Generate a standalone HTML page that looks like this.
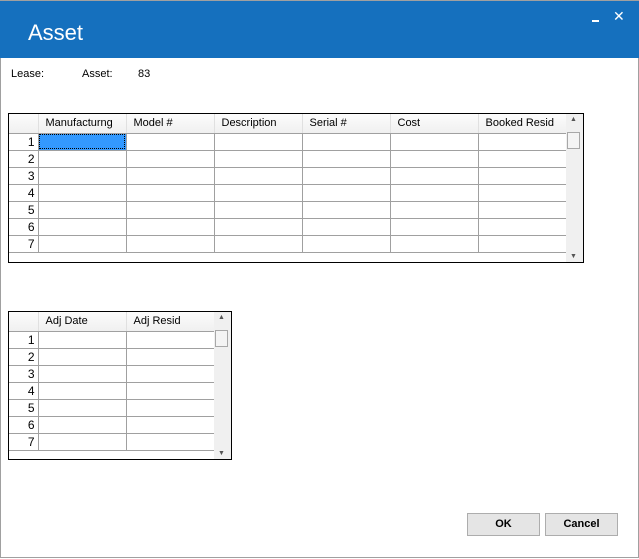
<!DOCTYPE html>
<html><head><style>
body{margin:0;width:639px;height:559px;position:relative;overflow:hidden;background:#fff;font-family:"Liberation Sans",sans-serif;font-size:11px;color:#000}
.win{position:absolute;left:0;top:0;width:637px;height:557px;border:1px solid #a0a0a0;border-top:none}
.title{position:absolute;left:0;top:0;width:639px;height:58px;background:#1570be;border-top:1px solid #a0a0a0;box-sizing:border-box}
.title span{position:absolute;left:28px;top:19px;color:#fff;font-size:22px}
.abs{position:absolute}
.grid{position:absolute;border:1px solid #000;background:#fff;overflow:hidden}
table{border-collapse:collapse;position:absolute;left:0;top:0}
td{border:1px solid #a0a0a0;height:17px;padding:0;box-sizing:border-box}
th{height:19px;background:linear-gradient(#fcfcfc,#f0f0f0);border-right:1px solid #e0e0e0;border-bottom:1px solid #a0a0a0;font-weight:normal;text-align:left;padding:0 0 0 7px;box-sizing:border-box}
td.rh{text-align:right;padding-right:3px;font-size:12px;border-left:none}
.sb{position:absolute;top:0;bottom:0;right:0;width:17px;background:#f0f0f0}
.thumb{position:absolute;left:1px;top:18px;width:13px;height:17px;border:1px solid #a8a8a8;background:#f4f4f4;box-sizing:border-box}
.btn{position:absolute;top:513px;width:73px;height:23px;background:#e5e5e5;border:1px solid #adadad;box-sizing:border-box;text-align:center;line-height:21px;font-weight:bold}
</style></head><body>
<div class="win"></div>
<div class="title"><span>Asset</span>
<div class="abs" style="left:592px;top:19px;width:7px;height:2px;background:#fff"></div>
<div class="abs" style="left:613px;top:7px;color:#fff;font-size:14px">✕</div>
</div>
<div class="abs" style="left:11px;top:68px">Lease:</div>
<div class="abs" style="left:82px;top:68px">Asset:</div>
<div class="abs" style="left:138px;top:68px">83</div>

<div class="grid" style="left:8px;top:113px;width:574px;height:148px">
<table>
<tr><th style="width:29px"></th><th style="width:88px">Manufacturng</th><th style="width:88px">Model #</th><th style="width:88px">Description</th><th style="width:88px">Serial #</th><th style="width:88px">Cost</th><th style="width:88px">Booked Resid</th></tr>
<tr><td class="rh">1</td><td style="background:#3399ff;outline:1px dotted #000;outline-offset:-2px"></td><td></td><td></td><td></td><td></td><td></td></tr>
<tr><td class="rh">2</td><td></td><td></td><td></td><td></td><td></td><td></td></tr>
<tr><td class="rh">3</td><td></td><td></td><td></td><td></td><td></td><td></td></tr>
<tr><td class="rh">4</td><td></td><td></td><td></td><td></td><td></td><td></td></tr>
<tr><td class="rh">5</td><td></td><td></td><td></td><td></td><td></td><td></td></tr>
<tr><td class="rh">6</td><td></td><td></td><td></td><td></td><td></td><td></td></tr>
<tr><td class="rh">7</td><td></td><td></td><td></td><td></td><td></td><td></td></tr>
</table>
<div class="sb"><div class="abs" style="left:4px;top:2px;font-size:7px;color:#555">▲</div><div class="thumb"></div><div class="abs" style="left:4px;bottom:2px;font-size:7px;color:#555">▼</div></div>
</div>

<div class="grid" style="left:8px;top:311px;width:222px;height:147px">
<table>
<tr><th style="width:29px"></th><th style="width:88px">Adj Date</th><th style="width:88px">Adj Resid</th></tr>
<tr><td class="rh">1</td><td></td><td></td></tr>
<tr><td class="rh">2</td><td></td><td></td></tr>
<tr><td class="rh">3</td><td></td><td></td></tr>
<tr><td class="rh">4</td><td></td><td></td></tr>
<tr><td class="rh">5</td><td></td><td></td></tr>
<tr><td class="rh">6</td><td></td><td></td></tr>
<tr><td class="rh">7</td><td></td><td></td></tr>
</table>
<div class="sb"><div class="abs" style="left:4px;top:2px;font-size:7px;color:#555">▲</div><div class="thumb"></div><div class="abs" style="left:4px;bottom:2px;font-size:7px;color:#555">▼</div></div>
</div>

<div class="btn" style="left:467px">OK</div>
<div class="btn" style="left:545px">Cancel</div>
</body></html>
